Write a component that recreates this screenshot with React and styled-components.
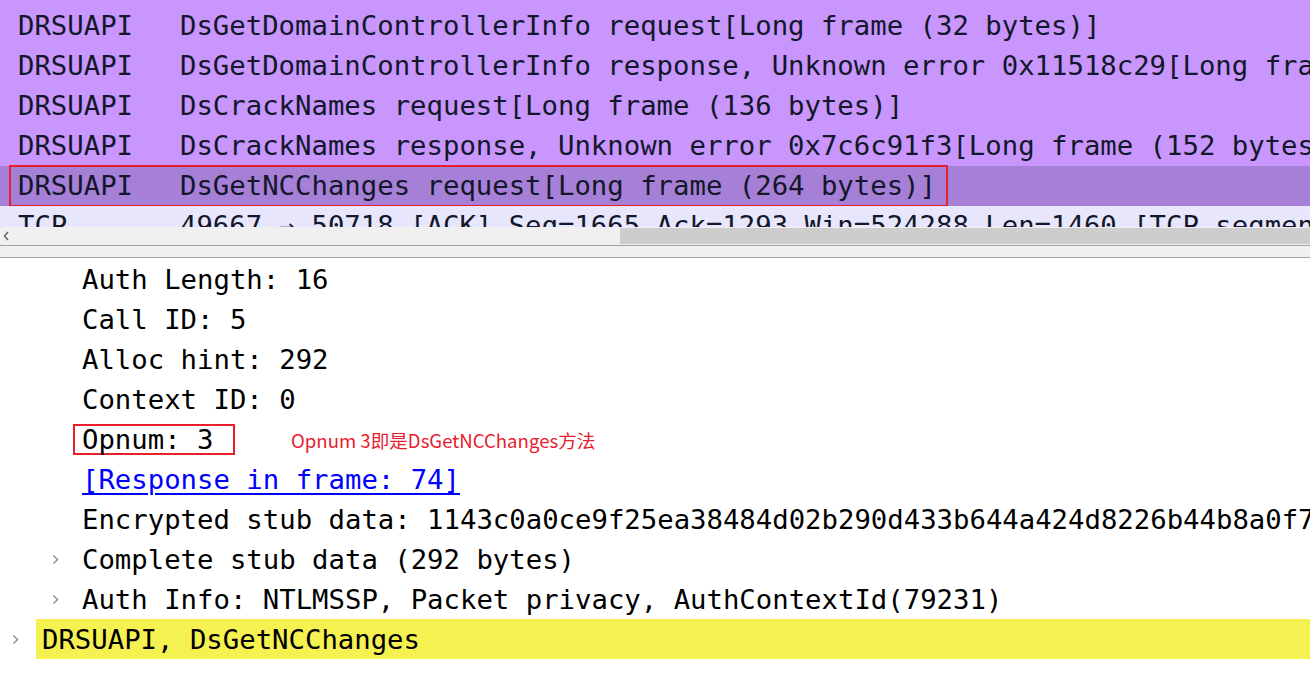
import React from "react";
import styled, { createGlobalStyle } from "styled-components";

const GlobalStyle = createGlobalStyle`
	html, body {
		margin: 0;
		padding: 0;
		background: #ffffff;
		overflow: hidden;
	}
`;

const mono = `"DejaVu Sans Mono", "Liberation Mono", monospace`;

const Page = styled.div`
	width: 1310px;
	height: 673px;
	display: flex;
	flex-direction: column;
	overflow: hidden;
	font-family: ${mono};
	font-size: 27.3px;
`;

/* packet list */
const PacketList = styled.div`
	height: 227px;
	overflow: hidden;
	display: flex;
	flex-direction: column;
	background: #e7e6fd;
`;

const PacketRow = styled.div`
	position: relative;
	box-sizing: border-box;
	flex: 0 0 40px;
	display: grid;
	grid-template-columns: 162px auto;
	align-items: center;
	padding-left: 18px;
	padding-bottom: ${(p) => (p.$peek ? 9 : 2)}px;
	white-space: nowrap;
	color: #12182a;
	background: ${(p) => p.$bg};
	&:first-child {
		margin-top: -34px;
	}
`;

const Marker = styled.div`
	position: absolute;
	left: 9px;
	top: -1px;
	width: 935px;
	height: 38px;
	border: 2px solid #e8202e;
`;

const HScroll = styled.div`
	height: 18px;
	display: flex;
	align-items: stretch;
	background: #f0f0f0;
	border-bottom: 1px solid #a3a3a3;
`;

const ScrollArrow = styled.div`
	width: 12px;
	display: flex;
	align-items: center;
	justify-content: center;
`;

const ScrollThumb = styled.div`
	margin-left: auto;
	width: 690px;
	margin-top: 1px;
	margin-bottom: 1px;
	background: #cdcdcd;
`;

const Splitter = styled.div`
	height: 11px;
	background: #f0f0f0;
	border-bottom: 1px solid #a3a3a3;
`;

/* details tree */
const Details = styled.div`
	flex: 1;
	padding-top: 1px;
	display: flex;
	flex-direction: column;
`;

const TreeRow = styled.div`
	flex: 0 0 40px;
	display: flex;
	align-items: center;
	white-space: nowrap;
	color: #000;
	padding-left: ${(p) => (p.$level === 0 ? 8 : 48)}px;
`;

const Toggle = styled.span`
	width: ${(p) => (p.$level === 0 ? 28 : 34)}px;
	flex: 0 0 auto;
	display: flex;
	align-items: center;
	padding-left: 4px;
	box-sizing: border-box;
`;

const Label = styled.span`
	height: 40px;
	display: flex;
	align-items: center;
	padding-left: ${(p) => (p.$hl ? 6 : 0)}px;
	padding-right: ${(p) => (p.$hl ? 8 : 0)}px;
	flex: ${(p) => (p.$hl ? 1 : "none")};
	background: ${(p) => (p.$hl ? "#f5f150" : "transparent")};
`;

const Link = styled.span`
	color: #0000ff;
	text-decoration: underline;
	text-underline-offset: 4px;
`;

const Boxed = styled.span`
	box-sizing: border-box;
	display: inline-flex;
	align-items: center;
	height: 31px;
	width: 162px;
	margin-left: -9px;
	padding-left: 7px;
	border: 2px solid #e8202e;
`;

const Note = styled.span`
	margin-left: 56px;
	font-family: "Noto Sans CJK SC", "Noto Sans", sans-serif;
	font-size: 18.6px;
	color: #e8202e;
`;

const Chevron = ({ color = "#8a8a8a" }) => (
	<svg width="7" height="11" viewBox="0 0 7 11">
		<path d="M1.5 1.5 L5.5 5.5 L1.5 9.5" fill="none" stroke={color} strokeWidth="1.4" />
	</svg>
);

const packets = [
	{ proto: "DRSUAPI", info: "DsBind response, Unknown error 0x3fe7a0c1[Long frame (60 bytes)]", bg: "#c896fd", peek: true },
	{ proto: "DRSUAPI", info: "DsGetDomainControllerInfo request[Long frame (32 bytes)]", bg: "#c896fd" },
	{ proto: "DRSUAPI", info: "DsGetDomainControllerInfo response, Unknown error 0x11518c29[Long frame (152 bytes)]", bg: "#c896fd" },
	{ proto: "DRSUAPI", info: "DsCrackNames request[Long frame (136 bytes)]", bg: "#c896fd" },
	{ proto: "DRSUAPI", info: "DsCrackNames response, Unknown error 0x7c6c91f3[Long frame (152 bytes)]", bg: "#c896fd" },
	{ proto: "DRSUAPI", info: "DsGetNCChanges request[Long frame (264 bytes)]", bg: "#a67fd6", marked: true },
	{ proto: "TCP", info: "49667 → 50718 [ACK] Seq=1665 Ack=1293 Win=524288 Len=1460 [TCP segment of a reassembled PDU]", bg: "#e7e6fd" },
];

const App = () => {
	return (
		<Page>
			<GlobalStyle />

			{/* Packet list */}
			<PacketList>
				{packets.map((p, i) => (
					<PacketRow key={i} $bg={p.bg} $peek={p.peek}>
						<span>{p.proto}</span>
						<span>{p.info}</span>
						{p.marked && <Marker />}
					</PacketRow>
				))}
			</PacketList>
			<HScroll>
				<ScrollArrow>
					<svg width="7" height="10" viewBox="0 0 7 10">
						<path d="M5 1 L1.5 5 L5 9" fill="none" stroke="#606060" strokeWidth="1.4" />
					</svg>
				</ScrollArrow>
				<ScrollThumb />
			</HScroll>
			<Splitter />

			{/* Packet details */}
			<Details>
				<TreeRow $level={1}>
					<Toggle />
					<Label>Auth Length: 16</Label>
				</TreeRow>
				<TreeRow $level={1}>
					<Toggle />
					<Label>Call ID: 5</Label>
				</TreeRow>
				<TreeRow $level={1}>
					<Toggle />
					<Label>Alloc hint: 292</Label>
				</TreeRow>
				<TreeRow $level={1}>
					<Toggle />
					<Label>Context ID: 0</Label>
				</TreeRow>
				<TreeRow $level={1}>
					<Toggle />
					<Boxed>Opnum: 3</Boxed>
					<Note>Opnum 3即是DsGetNCChanges方法</Note>
				</TreeRow>
				<TreeRow $level={1}>
					<Toggle />
					<Link>[Response in frame: 74]</Link>
				</TreeRow>
				<TreeRow $level={1}>
					<Toggle />
					<Label>Encrypted stub data: 1143c0a0ce9f25ea38484d02b290d433b644a424d8226b44b8a0f7e1</Label>
				</TreeRow>
				<TreeRow $level={1}>
					<Toggle>
						<Chevron />
					</Toggle>
					<Label>Complete stub data (292 bytes)</Label>
				</TreeRow>
				<TreeRow $level={1}>
					<Toggle>
						<Chevron />
					</Toggle>
					<Label>Auth Info: NTLMSSP, Packet privacy, AuthContextId(79231)</Label>
				</TreeRow>
				<TreeRow $level={0}>
					<Toggle $level={0}>
						<Chevron />
					</Toggle>
					<Label $hl>DRSUAPI, DsGetNCChanges</Label>
				</TreeRow>
			</Details>
		</Page>
	);
};

export default App;
